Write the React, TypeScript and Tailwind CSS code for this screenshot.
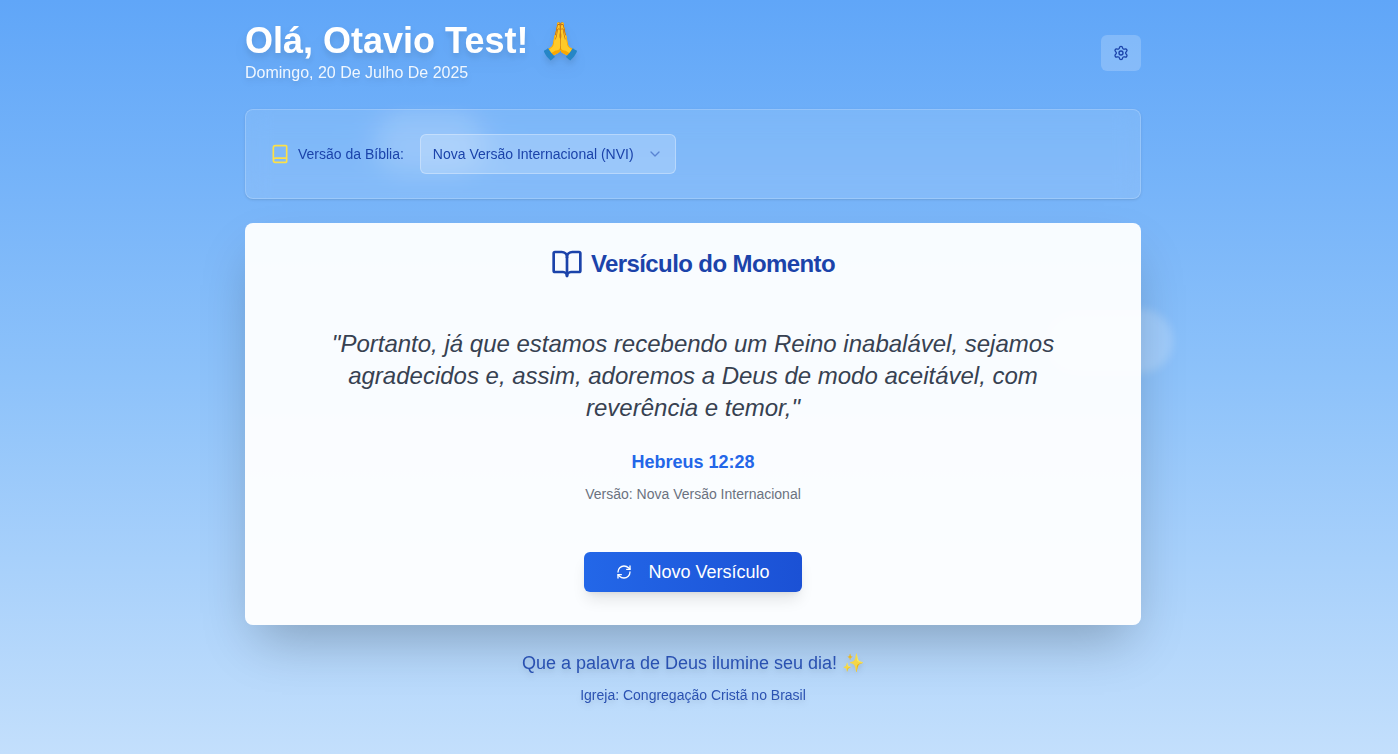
import { BookOpen, ChevronDown, RefreshCw, Settings } from "lucide-react";

function BookIcon({ className }: { className?: string }) {
  return (
    <svg
      viewBox="0 0 24 24"
      fill="none"
      stroke="currentColor"
      strokeWidth="2"
      strokeLinecap="round"
      strokeLinejoin="round"
      className={className}
      aria-hidden="true"
    >
      <path d="M4 19.5v-15A2.5 2.5 0 0 1 6.5 2H19a1 1 0 0 1 1 1v18a1 1 0 0 1-1 1H6.5a1 1 0 0 1 0-5H20" />
    </svg>
  );
}

function Clouds() {
  return (
    <div aria-hidden="true" className="pointer-events-none absolute inset-0 overflow-hidden">
      <div className="absolute left-[374px] top-[116px] h-14 w-28 rounded-full bg-white/20 blur-sm" />
      <div className="absolute left-[1045px] top-[309px] h-16 w-32 rounded-full bg-white/20 blur-[4px]" />
    </div>
  );
}

function Header() {
  return (
    <header className="flex items-center justify-between">
      <div>
        <h1 className="text-4xl font-bold text-white [filter:drop-shadow(0_10px_8px_rgb(0_0_0/0.04))_drop-shadow(0_4px_3px_rgb(0_0_0/0.1))]">
          Olá, Otavio Test! 🙏
        </h1>
        <p className="text-base text-white/90 [filter:drop-shadow(0_4px_3px_rgb(0_0_0/0.07))_drop-shadow(0_2px_2px_rgb(0_0_0/0.06))]">
          Domingo, 20 De Julho De 2025
        </p>
      </div>
      <button
        type="button"
        aria-label="Configurações"
        className="flex h-9 w-10 items-center justify-center rounded-md bg-white/20 text-[#1b43aa]"
      >
        <Settings className="size-4" />
      </button>
    </header>
  );
}

function VersionPicker() {
  return (
    <section className="flex items-center gap-4 rounded-lg border border-white/20 bg-white/10 p-6 shadow-sm backdrop-blur-md">
      <div className="flex items-center gap-2">
        <BookIcon className="size-5 text-[#fde047]" />
        <label htmlFor="version" className="text-sm text-[#1b43aa]">
          Versão da Bíblia:
        </label>
      </div>
      <div className="relative w-64">
        <select
          id="version"
          defaultValue="nvi"
          className="h-10 w-full appearance-none rounded-md border border-white/30 bg-white/20 px-3 text-sm text-[#1b43aa]"
        >
          <option value="nvi">Nova Versão Internacional (NVI)</option>
        </select>
        <ChevronDown className="pointer-events-none absolute right-[13px] top-3 size-4 text-[#1b43aa] opacity-50" />
      </div>
    </section>
  );
}

function VerseCard() {
  return (
    <main className="flex flex-col items-center rounded-lg border border-transparent bg-white/95 px-6 pb-8 pt-6 text-center shadow-[0_25px_50px_-12px_rgb(0_0_0/0.25)]">
      <h2 className="flex items-center gap-2 text-2xl font-bold tracking-tight text-[#1b43aa]">
        <BookOpen className="size-8" />
        Versículo do Momento
      </h2>
      <blockquote className="mt-12 max-w-3xl px-4 text-2xl italic text-[#374151]">
        "Portanto, já que estamos recebendo um Reino inabalável, sejamos agradecidos e, assim,
        adoremos a Deus de modo aceitável, com reverência e temor,"
      </blockquote>
      <p className="mt-6 text-lg font-bold text-[#2366e8]">Hebreus 12:28</p>
      <p className="mt-2 text-sm text-[#6b7280]">Versão: Nova Versão Internacional</p>
      <button
        type="button"
        className="mt-12 flex h-10 items-center gap-4 rounded-md bg-linear-to-r/srgb from-[#2367e8] to-[#1b51d5] px-8 text-lg text-white shadow-lg"
      >
        <RefreshCw className="size-4" />
        Novo Versículo
      </button>
    </main>
  );
}

export default function App() {
  return (
    <div className="relative min-h-screen bg-linear-to-b/srgb from-[#60a6f8] via-[#8dc2fa] to-[#c3dffc] pr-3 font-['Liberation_Sans',Arial,sans-serif]">
      <Clouds />
      <div className="relative mx-auto flex max-w-4xl flex-col gap-6 py-[21px]">
        <Header />
        <VersionPicker />
        <VerseCard />
        <footer className="flex flex-col items-center gap-2 text-[#1b43aa]/90 [filter:drop-shadow(0_4px_3px_rgb(0_0_0/0.07))_drop-shadow(0_2px_2px_rgb(0_0_0/0.06))]">
          <p className="text-lg">Que a palavra de Deus ilumine seu dia! ✨</p>
          <p className="text-sm">Igreja: Congregação Cristã no Brasil</p>
        </footer>
      </div>
    </div>
  );
}
